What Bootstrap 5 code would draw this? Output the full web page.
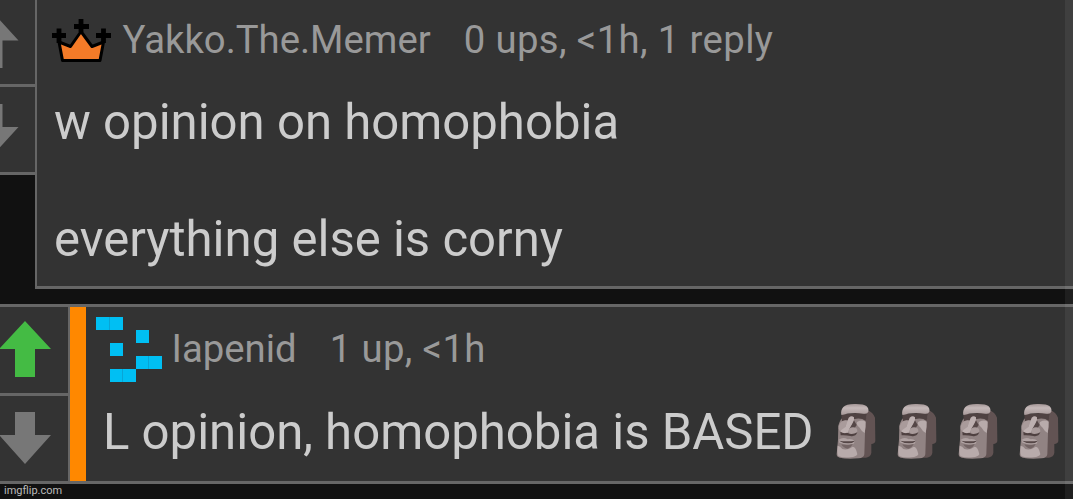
<!DOCTYPE html>
<html lang="en">
<head>
    <title>Comments</title>
    <meta charset="UTF-8">
    <meta name="viewport" content="width=device-width, initial-scale=1.0">
    <link href="https://cdn.jsdelivr.net/npm/bootstrap@5.3.0/dist/css/bootstrap.min.css" rel="stylesheet">
    <style>
        body {
            background: #111;
            font-family: Roboto, sans-serif;
            width: 1073px;
            height: 499px;
        }
        svg { display: block; flex: none; }
        .comment-first { height: 289px; }
        .comment-reply {
            height: 180px;
            margin-top: 15px;
            border-top: 3px solid #666;
            border-bottom: 3px solid #666;
        }
        .vote-box { background: #333; flex: none; }
        .comment-first .vote-box { width: 35px; height: 175px; border-bottom: 3px solid #666; }
        .comment-reply .vote-box { width: 68px; }
        .comment-first .vote-up { height: 86.5px; border-bottom: 3px solid #666; }
        .comment-reply .vote-up { height: 89px; border-bottom: 3px solid #666; }
        .comment-body { background: #333; border-left: 2px solid #666; min-width: 0; }
        .comment-first .comment-body { border-bottom: 3px solid #666; padding: 17px 0 0 15px; }
        .unread-bar { width: 16px; background: #ff8800; flex: none; }
        .comment-meta {
            color: #999;
            font-size: 38.3px;
            line-height: 45px;
            height: 45px;
            white-space: nowrap;
        }
        .comment-text {
            color: #ccc;
            font-size: 49.1px;
            line-height: 58.5px;
            white-space: pre-line;
        }
        .comment-first .comment-text { margin: 31px 0 0 2px; }
        .reply-content { padding: 10px 0 0 10px; }
        .comment-reply .comment-meta { height: 65px; }
        .comment-reply .comment-meta span { padding-top: 8.5px; }
        .comment-reply .comment-text { margin: 21px 0 0 7px; white-space: nowrap; }
        .meta-name { margin: 0 33px 0 10.5px; }
        .comment-reply .meta-name { margin-left: 9.5px; }
        .meta-stats { letter-spacing: .38px; }
        .moai-row { gap: 21.2px; margin-left: 22px; }
        .site-mark { color: #bbb; font-size: 11px; line-height: 13px; margin-left: 4px; }
        .scroll-strip { width: 8px; background: rgba(255, 255, 255, .06); }
    </style>
</head>
<body class="overflow-hidden position-relative">
    <!-- Top comment -->
    <div class="comment-first d-flex align-items-start">
        <div class="vote-box">
            <div class="vote-up">
                <svg width="35" height="83" viewBox="0 0 35 83"><path d="M-7 12.500L18.500 40.500H2.500V68H-16V40.500H-32z" fill="#777"/></svg>
            </div>
            <svg width="35" height="84" viewBox="0 0 35 84"><path d="M-16 17H2.500V40H18.500L-7 68L-32 40H-16z" fill="#777"/></svg>
        </div>
        <div class="comment-body flex-grow-1 h-100">
            <div class="comment-meta d-flex">
                <svg width="60" height="46" viewBox="0 0 60 46">
                    <path d="M29 2V15M22 9.500H37M7 11.500V26M0 18.500H14M51.500 11.500V26M44 18.500H59" fill="none" stroke="#000" stroke-width="4.800"/>
                    <path d="M7 25L18.500 29.500L29 14.500L40 29.500L51.500 25L48 43.500H10.500z" fill="#f47b28" stroke="#000" stroke-width="3" stroke-linejoin="round"/>
                </svg>
                <span class="meta-name">Yakko.The.Memer</span>
                <span class="meta-stats">0 ups, &lt;1h, 1 reply</span>
            </div>
            <div class="comment-text">w opinion on homophobia

                everything else is corny</div>
        </div>
    </div>

    <!-- Reply -->
    <div class="comment-reply d-flex">
        <div class="vote-box">
            <div class="vote-up">
                <svg width="68" height="86" viewBox="0 0 68 86"><path d="M25 14L51 42H35V70H15V42H-1z" fill="#44bb44"/></svg>
            </div>
            <svg width="68" height="84" viewBox="0 0 68 84"><path d="M15 16H35V39H51L25 68L-1 39H15z" fill="#777"/></svg>
        </div>
        <div class="comment-body d-flex flex-grow-1">
            <div class="unread-bar"></div>
            <div class="reply-content">
                <div class="comment-meta d-flex">
                    <svg width="66" height="66" viewBox="0 0 66 66" shape-rendering="crispEdges" fill="#00bff3">
                        <path d="M0 0H27V13H0zM40 13H53V26H40zM14 26H27V39H14zM40 39H66V52H40zM14 52H40V65H14z"/>
                        <path d="M13 0H14V13H13zM52 39H53V52H52zM26 52H27V65H26z" fill="#08a5d6"/>
                    </svg>
                    <span class="meta-name">Iapenid</span>
                    <span class="meta-stats">1 up, &lt;1h</span>
                </div>
                <div class="comment-text d-flex">
                    <span>L opinion, homophobia is BASED</span>
                    <div class="moai-row d-flex">
                        <svg width="40" height="57" viewBox="48 40 120 171">
                            <defs>
                                <linearGradient id="stone" x1="0" y1="0" x2="0" y2="1">
                                    <stop offset="0" stop-color="#a39595"/>
                                    <stop offset=".35" stop-color="#c4b8b8"/>
                                    <stop offset="1" stop-color="#a89a9a"/>
                                </linearGradient>
                                <g id="moai">
                                    <path d="M140 60Q160 68 165 84L166 154Q165 162 154 163V190Q152 202 138 204H112V66z" fill="#625353"/>
                                    <path d="M66 74L140 72Q138 88 136 96L133 194Q131 205 116 206Q80 209 59 204Q50 202 50 194L54 150L55 108Q60 91 66 86z" fill="#918383"/>
                                    <path d="M64 76Q100 67 141 72L137 94Q124 84 104 88L66 95z" fill="#4f4242"/>
                                    <path d="M64 76Q61 63 70 52Q79 42 108 43Q132 43 139 49Q147 56 145 66Q142 74 130 72Q94 67 64 76z" fill="url(#stone)"/>
                                    <path d="M62 98Q74 88 84 94L74 115L61 128Q54 120 56 109z" fill="#a99b9b"/>
                                    <path d="M111 97Q126 89 137 96Q138 112 134 130Q126 127 119 114Q108 106 111 97z" fill="#b8abab"/>
                                    <path d="M101 90L110 106L102 118L87 120z" fill="#554747"/>
                                    <path d="M86 84Q95 76 102 83Q104 90 98 100L88 117L84 130H66Q60 128 64 121L76 112z" fill="#bdb0b0"/>
                                    <ellipse cx="99" cy="124" rx="13" ry="11" fill="#a99b9b"/>
                                    <path d="M61 126Q71 133 82 129Q95 138 112 128Q107 142 91 139Q77 136 62 137z" fill="#4f4141"/>
                                    <path d="M56 150Q70 141 83 149Q94 146 105 154L101 162Q82 168 58 159z" fill="#b0a3a3"/>
                                    <path d="M57 153Q80 156 106 153Q98 161 86 161Q70 162 57 153z" fill="#554747"/>
                                    <path d="M64 164Q82 168 98 163Q92 175 82 177Q69 174 64 164z" fill="#736464"/>
                                    <path d="M53 168Q61 169 67 178Q82 183 98 171Q108 172 112 194Q108 202 92 203Q70 205 56 200Q50 195 53 168z" fill="#b8abab"/>
                                </g>
                            </defs>
                            <use href="#moai"/>
                        </svg>
                        <svg width="40" height="57" viewBox="48 40 120 171"><use href="#moai"/></svg>
                        <svg width="40" height="57" viewBox="48 40 120 171"><use href="#moai"/></svg>
                        <svg width="40" height="57" viewBox="48 40 120 171"><use href="#moai"/></svg>
                    </div>
                </div>
            </div>
        </div>
    </div>

    <div class="site-mark">imgflip.com</div>

    <!-- Scroll track over the right edge -->
    <div class="scroll-strip position-absolute top-0 end-0 h-100"></div>

    <script src="https://cdn.jsdelivr.net/npm/bootstrap@5.3.0/dist/js/bootstrap.bundle.min.js"></script>
</body>
</html>
